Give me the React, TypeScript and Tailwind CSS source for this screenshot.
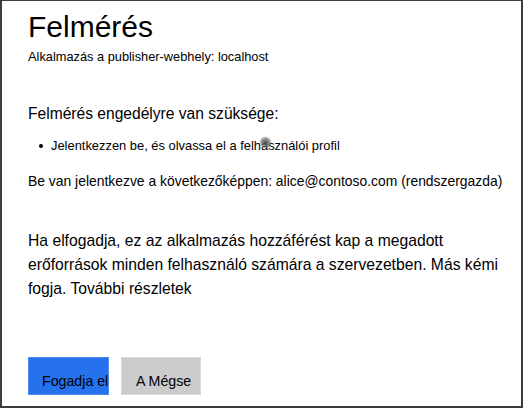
import type { ReactNode } from 'react';

const font = { fontFamily: '"Liberation Sans", Arial, sans-serif' };

function Button({ tone, children }: { tone: 'primary' | 'secondary'; children: ReactNode }) {
  const color =
    tone === 'primary'
      ? 'w-[81px] bg-[#2672ec] border-[#4a8cf0] pl-[13px]'
      : 'w-[80px] bg-[#cccccc] border-[#d9d9d9] pl-[14px]';
  return (
    <button
      type="button"
      className={`h-[38px] overflow-hidden whitespace-nowrap border text-left text-[14.2px] leading-[24px] pt-[10px] text-black ${color}`}
    >
      {children}
    </button>
  );
}

export default function App() {
  return (
    <div
      style={font}
      className="box-border h-[408px] w-[523px] overflow-hidden border-x-2 border-b-2 border-t border-[#3c3c3c] bg-white pl-[26px] text-black"
    >
      <h1 className="mt-[8px] text-[30px] leading-[36px]">Felmérés</h1>
      <p className="mt-[4px] text-[12.8px] leading-[16px]">Alkalmazás a publisher-webhely: localhost</p>

      <h2 className="mt-[39px] text-[15.6px] leading-[20px]">Felmérés engedélyre van szüksége:</h2>
      <div className="relative mt-[14px] flex items-center text-[12.9px] leading-[16px]">
        <span className="ml-[11px] mr-[8px] h-[4px] w-[4px] rounded-full bg-black" />
        <span>Jelentkezzen be, és olvassa el a felhasználói profil</span>
        {/* egérmutató nyoma */}
        <span className="pointer-events-none absolute left-[231px] top-[-2px] h-[13px] w-[13px] rounded-full bg-[radial-gradient(circle,rgba(70,70,70,0.95)_0%,rgba(110,110,110,0.7)_45%,rgba(160,160,160,0)_72%)]" />
      </div>

      <p className="mt-[19px] whitespace-nowrap text-[13.9px] leading-[16px]">
        Be van jelentkezve a következőképpen: alice@contoso.com (rendszergazda)
      </p>

      <p className="mt-[40px] whitespace-nowrap text-[15.7px] leading-[24px]">
        Ha elfogadja, ez az alkalmazás hozzáférést kap a megadott
        <br />
        erőforrások minden felhasználó számára a szervezetben. Más kémi
        <br />
        fogja. További részletek
      </p>

      <div className="mt-[56px] flex gap-[12px]">
        <Button tone="primary">Fogadja el</Button>
        <Button tone="secondary">A Mégse</Button>
      </div>
    </div>
  );
}
